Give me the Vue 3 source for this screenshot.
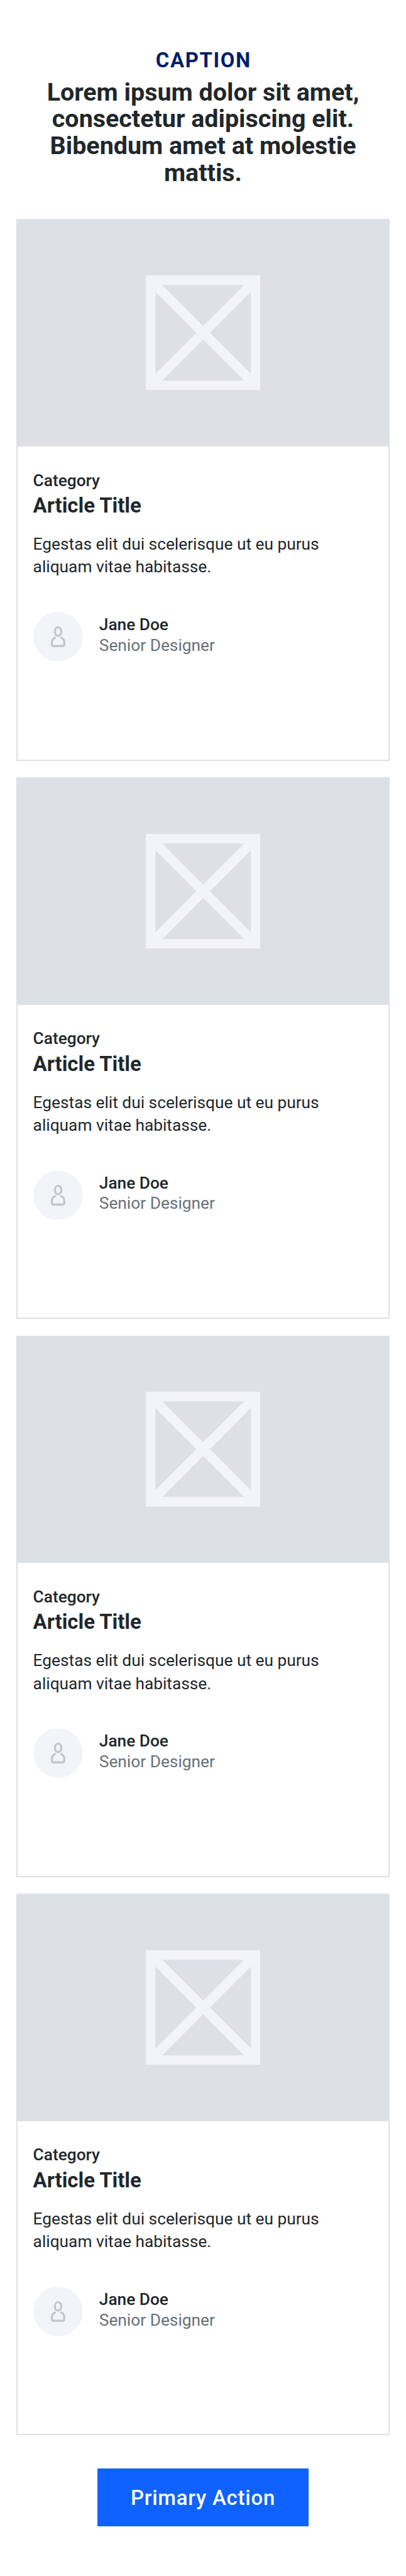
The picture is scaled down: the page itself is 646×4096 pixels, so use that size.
<script setup>
const articles = Array.from({ length: 4 }, (_, id) => ({
  id,
  category: 'Category',
  title: 'Article Title',
  excerpt: 'Egestas elit dui scelerisque ut eu purus aliquam vitae habitasse.',
  author: 'Jane Doe',
  role: 'Senior Designer'
}))
</script>

<template>
  <main class="page">
    <header class="intro">
      <p class="caption">CAPTION</p>
      <h1 class="headline">Lorem ipsum dolor sit amet, consectetur adipiscing elit. Bibendum amet at molestie mattis.</h1>
    </header>

    <section class="cards">
      <article v-for="article in articles" :key="article.id" class="card">
        <div class="media">
          <svg class="placeholder" viewBox="0 0 222 222" fill="none" stroke="#f2f4f8">
            <rect x="9.25" y="9.25" width="203.5" height="203.5" stroke-width="18.5" />
            <path d="M10 10 212 212M212 10 10 212" stroke-width="18.5" />
          </svg>
        </div>
        <div class="body">
          <p class="category">{{ article.category }}</p>
          <h2 class="title">{{ article.title }}</h2>
          <p class="excerpt">{{ article.excerpt }}</p>
          <div class="author">
            <svg class="avatar" viewBox="0 0 96 96" fill="none">
              <circle cx="48" cy="48" r="48" fill="#f2f4f8" />
              <g stroke="#c1c7cd" stroke-width="4" stroke-linecap="round" stroke-linejoin="round">
                <rect x="42" y="30" width="12" height="16" rx="6" />
                <path d="M42 50C38.5 51.5 36 55 36 59V63a3 3 0 0 0 3 3H57a3 3 0 0 0 3-3V59C60 55 57.5 51.5 54 50" />
              </g>
            </svg>
            <div class="who">
              <p class="name">{{ article.author }}</p>
              <p class="role">{{ article.role }}</p>
            </div>
          </div>
        </div>
      </article>
    </section>

    <button class="action" type="button">Primary Action</button>
  </main>
</template>

<style>
body {
  background: #fff;
}
</style>

<style scoped>
.page {
  --u: 0.82184px;
  box-sizing: border-box;
  width: 646px;
  height: 4096px;
  padding: calc(93.5 * var(--u)) calc(32 * var(--u)) 0;
  display: flex;
  flex-direction: column;
  align-items: center;
  overflow: hidden;
  color: #21272a;
  font-family: Roboto, "Liberation Sans", sans-serif;
}

p,
h1,
h2 {
  margin: 0;
}

.intro {
  height: calc(330.5 * var(--u));
  text-align: center;
}

.caption {
  padding-left: calc(2 * var(--u));
  color: #001d6c;
  font-size: calc(40 * var(--u));
  line-height: calc(48 * var(--u));
  font-weight: 700;
  letter-spacing: calc(2 * var(--u));
}

.headline {
  margin-top: calc(11.3 * var(--u));
  font-size: calc(48 * var(--u));
  line-height: calc(52 * var(--u));
  font-weight: 700;
}

.cards {
  width: 100%;
  display: flex;
  flex-direction: column;
  gap: calc(32 * var(--u));
}

.card {
  box-sizing: border-box;
  height: calc(1048 * var(--u));
  border: 2px solid #dde1e6;
}

.media {
  height: calc(440 * var(--u) - 2px);
  box-sizing: border-box;
  padding-bottom: 2px;
  display: flex;
  align-items: center;
  justify-content: center;
  background: #dde1e6;
}

.placeholder {
  width: calc(222 * var(--u));
  height: calc(222 * var(--u));
}

.body {
  padding: calc(43.15 * var(--u)) calc(32 * var(--u) - 2px) 0;
}

.category {
  font-size: calc(32 * var(--u));
  line-height: calc(44.8 * var(--u));
  font-weight: 500;
}

.title {
  margin-top: calc(4.8 * var(--u));
  font-size: calc(40 * var(--u));
  line-height: calc(44 * var(--u));
  font-weight: 700;
}

.excerpt {
  margin-top: calc(30.1 * var(--u));
  font-size: calc(32 * var(--u));
  line-height: calc(44.1 * var(--u));
}

.author {
  margin-top: calc(64.9 * var(--u));
  display: flex;
  gap: calc(32 * var(--u));
}

.avatar {
  width: calc(96 * var(--u));
  height: calc(96 * var(--u));
}

.who {
  padding-top: calc(5.3 * var(--u));
  font-size: calc(32 * var(--u));
  line-height: calc(39.6 * var(--u));
}

.name {
  font-weight: 500;
}

.role {
  color: #697077;
}

.action {
  margin-top: calc(64 * var(--u));
  width: calc(408 * var(--u));
  height: calc(112 * var(--u));
  flex: none;
  padding: 1px 0 0;
  border: 0;
  background: #0f62fe;
  color: #fff;
  font-family: inherit;
  font-size: calc(40 * var(--u));
  font-weight: 500;
  letter-spacing: calc(1 * var(--u));
}
</style>
